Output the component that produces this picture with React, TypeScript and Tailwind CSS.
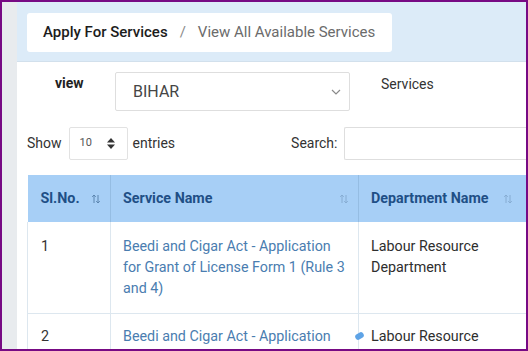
import React from 'react';

const SortArrows: React.FC<{ color?: string }> = ({ color = '#6b93bb' }) => (
  <svg width="10" height="10" viewBox="0 0 10 10" fill="none" stroke={color} strokeWidth="1" className="shrink-0">
    <path d="M3 9V1M1.2 2.8L3 1l1.8 1.8" />
    <path d="M7 1v8M5.2 7.2L7 9l1.8-1.8" />
  </svg>
);

export default function App() {
  return (
    <div
      className="w-[528px] h-[351px] overflow-hidden border-2 border-[#770a84] flex bg-white"
      style={{ fontFamily: 'Roboto, "Liberation Sans", sans-serif' }}
    >
      {/* left rail */}
      <div className="w-[15px] shrink-0 bg-[#e8ebee]" />

      <div className="flex-1 min-w-0 flex flex-col">
        {/* breadcrumb band */}
        <div className="h-[60px] shrink-0 bg-[#dcebf8] pl-[10px] pt-[11px] border-b border-[#d2e0ec]">
          <div className="w-[365px] h-[39px] bg-white rounded-[3px] flex items-center pl-[16px] text-[15px]">
            <span className="font-medium text-[#1c1c1c]">Apply For Services</span>
            <span className="mx-[12px] text-[#8a8a8a]">/</span>
            <span className="text-[#6b6b6b]">View All Available Services</span>
          </div>
        </div>

        {/* filter row */}
        <div className="flex items-start pt-[10px] h-[50px] shrink-0">
          <div className="w-[98px] pl-[38px] pt-[1px] text-[14px] font-bold text-[#222]">view</div>
          <div className="w-[235px] h-[39px] border border-[#dedede] rounded-[2px] flex items-center justify-between pl-[17px] pr-[8px] text-[16px] text-[#454545]">
            <span>BIHAR</span>
            <svg width="10" height="6" viewBox="0 0 10 6" fill="none" stroke="#8a8a8a" strokeWidth="1.2">
              <path d="M1 1l4 4 4-4" />
            </svg>
          </div>
          <div className="ml-[31px] pt-[2px] text-[14px] text-[#333]">Services</div>
        </div>

        {/* show / search */}
        <div className="flex items-center h-[33px] mt-[15px] shrink-0 pl-[10px] text-[14px] text-[#333]">
          <span>Show</span>
          <div className="ml-[7px] w-[59px] h-[33px] border border-[#e2e2e2] rounded-[2px] flex items-center justify-between pl-[10px] pr-[12px] text-[11px] text-[#555]">
            <span>10</span>
            <svg width="8" height="11" viewBox="0 0 8 11" fill="#333">
              <path d="M4 0L8 4.5H0z" />
              <path d="M4 11L0 6.5H8z" />
            </svg>
          </div>
          <span className="ml-[5px]">entries</span>
          <span className="ml-[116px]">Search:</span>
          <div className="ml-[7px] flex-1 h-[33px] border border-[#dedede] border-r-0 rounded-l-[2px]" />
        </div>

        {/* table */}
        <div className="mt-[15px] pl-[10px] overflow-hidden">
          <table className="table-fixed border-collapse w-[560px] min-w-[560px] text-[14.3px]">
            <colgroup>
              <col className="w-[83px]" />
              <col className="w-[248px]" />
              <col className="w-[229px]" />
            </colgroup>
            <thead>
              <tr className="h-[47px] bg-[#a7cff6] text-[#1f4f86] font-bold">
                <th className="border-r border-[#95bde3] pl-[13px] pr-[9px] text-left">
                  <div className="flex items-center justify-between">
                    <span>Sl.No.</span>
                    <SortArrows color="#5a84ae" />
                  </div>
                </th>
                <th className="border-r border-[#95bde3] pl-[12px] pr-[9px] text-left">
                  <div className="flex items-center justify-between">
                    <span>Service Name</span>
                    <SortArrows color="#86acd2" />
                  </div>
                </th>
                <th className="pl-[12px] text-left relative">
                  <span className="whitespace-nowrap">Department Name</span>
                  <span className="absolute left-[144px] top-[19px]">
                    <SortArrows color="#86acd2" />
                  </span>
                </th>
              </tr>
            </thead>
            <tbody className="leading-[21px]">
              <tr className="h-[91px] border-b border-[#dde7ef] align-top">
                <td className="border-r border-l border-[#dde7ef] pl-[13px] pt-[14px] text-[#333]">1</td>
                <td className="border-r border-[#dde7ef] pl-[12px] pr-[10px] pt-[14px] text-[#4a7db0]">
                  Beedi and Cigar Act - Application for Grant of License Form 1 (Rule 3 and 4)
                </td>
                <td className="pl-[12px] pr-[50px] pt-[14px] text-[#2e2e2e]">
                  Labour Resource
                  <br />
                  Department
                </td>
              </tr>
              <tr className="h-[60px] align-top">
                <td className="border-r border-l border-[#dde7ef] pl-[13px] pt-[12px] text-[#333]">2</td>
                <td className="border-r border-[#dde7ef] pl-[12px] pr-[10px] pt-[12px] text-[#4a7db0] relative">
                  Beedi and Cigar Act - Application
                  <span className="absolute right-[-6px] top-[19px] w-[9px] h-[6px] rounded-full bg-[#5ea3e6] rotate-[-30deg]" />
                </td>
                <td className="pl-[12px] pr-[50px] pt-[12px] text-[#2e2e2e]">Labour Resource</td>
              </tr>
            </tbody>
          </table>
        </div>
      </div>
    </div>
  );
}
